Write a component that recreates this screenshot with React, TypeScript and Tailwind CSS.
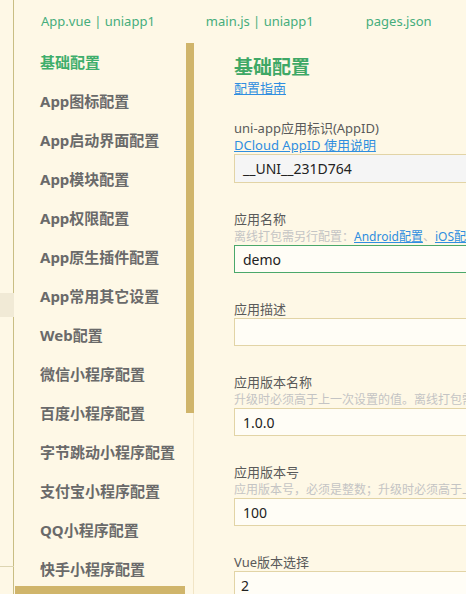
import React from "react";

const menu = [
  "基础配置",
  "App图标配置",
  "App启动界面配置",
  "App模块配置",
  "App权限配置",
  "App原生插件配置",
  "App常用其它设置",
  "Web配置",
  "微信小程序配置",
  "百度小程序配置",
  "字节跳动小程序配置",
  "支付宝小程序配置",
  "QQ小程序配置",
  "快手小程序配置",
];

const tabs = ["App.vue | uniapp1", "main.js | uniapp1", "pages.json"];

function Field({
  label,
  hint,
  value,
  variant = "normal",
}: {
  label: string;
  hint?: React.ReactNode;
  value: string;
  variant?: "normal" | "disabled" | "focus";
}) {
  const box =
    variant === "disabled"
      ? "bg-[#f5f5f5] border-[#e2d4a6]"
      : variant === "focus"
        ? "bg-[#fffdf6] border-[#4aa86a]"
        : "bg-[#fffdf6] border-[#e2d4a6]";
  return (
    <div className="mb-[28px]">
      <div className="h-[17px] leading-[17px] text-[13px] text-[#5a5a5a] whitespace-nowrap">{label}</div>
      {hint && (
        <div className="h-[17px] leading-[17px] text-[12px] text-[#c4c4c4] whitespace-nowrap">{hint}</div>
      )}
      <div className={`w-[320px] h-[28px] border ${box} flex items-center pl-[8px] text-[14px] text-[#222]`}>
        {value}
      </div>
    </div>
  );
}

export default function App() {
  return (
    <div className="w-[466px] h-[594px] overflow-hidden flex bg-[#fef8e6] font-['Noto_Sans','Noto_Sans_CJK_SC',sans-serif]">
      {/* left strip */}
      <div className="w-[14px] shrink-0 border-r border-[#c9be84] relative">
        <div className="absolute left-0 top-[293px] w-[14px] h-[24px] bg-[#f1ead6]" />
        <div className="absolute left-0 top-[566px] w-[14px] h-px bg-[#ddd5b2]" />
      </div>

      <div className="flex-1 flex flex-col min-w-0">
        {/* tabs */}
        <div className="h-[43px] shrink-0 flex items-center text-[13px] text-[#45ad7c] whitespace-nowrap">
          <span className="ml-[27px]">{tabs[0]}</span>
          <span className="ml-[51px]">{tabs[1]}</span>
          <span className="ml-[52px]">{tabs[2]}</span>
        </div>

        <div className="flex-1 flex min-h-0">
          {/* sidebar */}
          <div className="w-[180px] shrink-0 relative border-r border-[#f1e5c6]">
            {menu.map((m, i) => (
              <div
                key={m}
                className={`h-[39px] flex items-center pl-[26px] text-[15px] font-bold whitespace-nowrap ${
                  i === 0 ? "text-[#3fae6c]" : "text-[#6a6a6a]"
                }`}
              >
                {m}
              </div>
            ))}
            <div className="absolute left-[172px] top-0 w-[8px] h-[370px] bg-[#d0b56b]" />
            <div className="absolute left-[1px] bottom-0 w-[170px] h-[8px] bg-[#d0b56b]" />
          </div>

          {/* content */}
          <div className="flex-1 pl-[40px] pt-[11px] min-w-0">
            <div className="h-[26px] leading-[26px] text-[19px] font-bold text-[#3fa866]">基础配置</div>
            <div className="h-[17px] leading-[17px] text-[13px] text-[#2f8ee0] underline">配置指南</div>
            <div className="h-[23px]" />
            <div className="mb-[28px]">
              <div className="h-[17px] leading-[17px] text-[13px] text-[#5a5a5a] whitespace-nowrap">uni-app应用标识(AppID)</div>
              <div className="h-[17px] leading-[17px] text-[13px] text-[#2f8ee0] underline whitespace-nowrap">DCloud AppID 使用说明</div>
              <div className="w-[320px] h-[29px] border border-[#e2d4a6] bg-[#f5f5f5] flex items-center pl-[8px] text-[14px] text-[#222]">
                __UNI__231D764
              </div>
            </div>
            <Field
              label="应用名称"
              hint={
                <>
                  离线打包需另行配置：<span className="text-[#2f8ee0] underline">Android配置</span>、
                  <span className="text-[#2f8ee0] underline">iOS配置</span>
                </>
              }
              value="demo"
              variant="focus"
            />
            <Field label="应用描述" value="" />
            <Field label="应用版本名称" hint="升级时必须高于上一次设置的值。离线打包需另行配置" value="1.0.0" />
            <Field label="应用版本号" hint="应用版本号，必须是整数；升级时必须高于上一次设置的值" value="100" />
            <div>
              <div className="h-[17px] leading-[17px] text-[13px] text-[#5a5a5a] whitespace-nowrap">Vue版本选择</div>
              <div className="w-[320px] h-[28px] border border-[#e2d4a6] bg-[#fffdf6] flex items-center pl-[6px] text-[14px] text-[#222]">
                2
              </div>
            </div>
          </div>
        </div>
      </div>
    </div>
  );
}
